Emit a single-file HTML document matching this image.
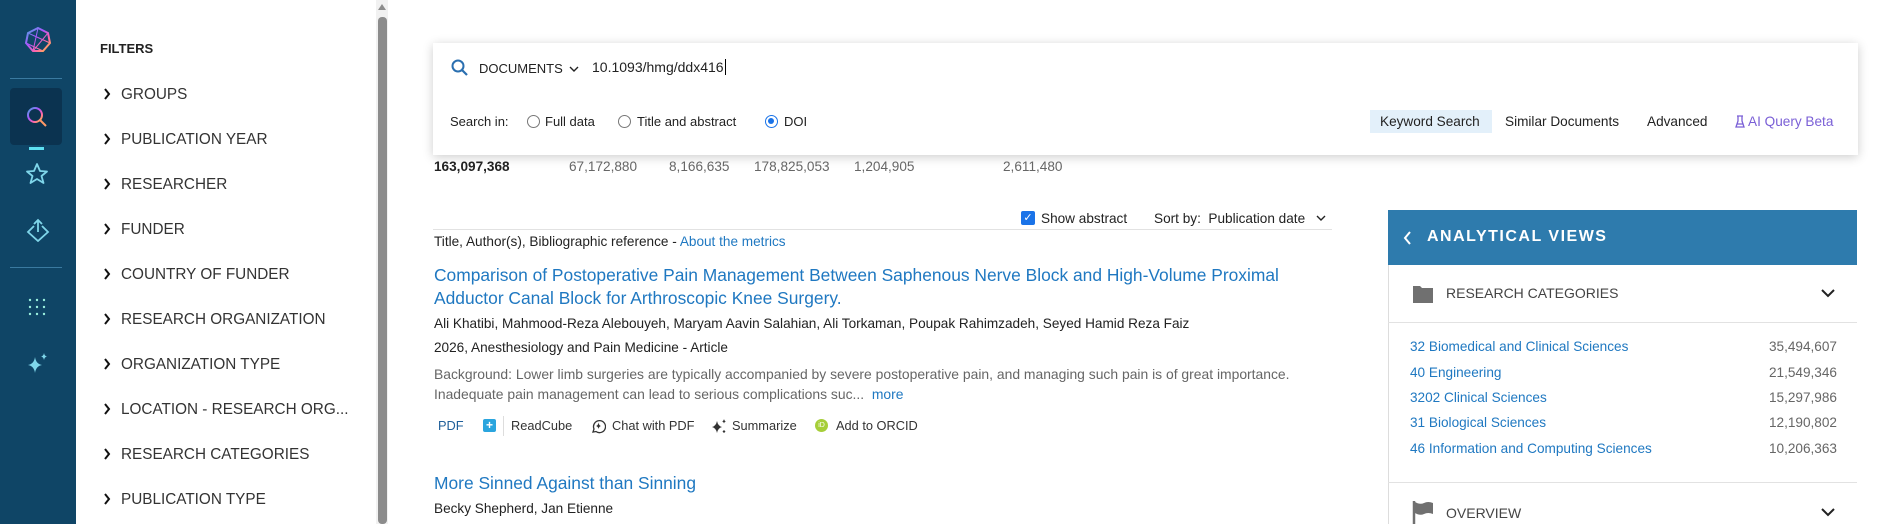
<!DOCTYPE html>
<html><head><meta charset="utf-8"><style>
*{margin:0;padding:0;box-sizing:border-box}
body{width:1897px;height:524px;overflow:hidden;background:#fff;font-family:"Liberation Sans",Arial,sans-serif;color:#222;position:relative}
.a{position:absolute;white-space:nowrap}
.side{left:0;top:0;width:76px;height:524px;background:#0f4566}
.fi{font-size:15.3px;color:#333;left:121px}
.blue{color:#1f78c1}
.grey{color:#666}
.t14{font-size:14px}
.t13{font-size:13px}
.t136{font-size:13.6px}
</style></head><body>
<div class="a side"></div>
<svg class="a" style="left:24px;top:26px" width="28" height="28" viewBox="0 0 28 28"><polygon points="14,2 24,7 26,17 19,25 9,25 2,17 4,7" fill="none" stroke="url(#g)" stroke-width="2"/><path d="M14,2 L9,25 M4,7 L26,17 M24,7 L9,25 M2,17 L19,25" stroke="url(#g)" stroke-width="1" fill="none"/><defs><linearGradient id="g" x1="0" y1="0" x2="1" y2="1"><stop offset="0" stop-color="#4ad"/><stop offset=".4" stop-color="#a5f"/><stop offset=".7" stop-color="#f6a"/><stop offset="1" stop-color="#fc3"/></linearGradient></defs></svg>
<div class="a" style="left:10px;top:78px;width:52px;height:1px;background:#3a7aa0"></div>
<div class="a" style="left:10px;top:88px;width:52px;height:57px;background:#0b3350;border-radius:4px"></div>
<svg class="a" style="left:25px;top:105px" width="24" height="24" viewBox="0 0 24 24"><circle cx="10" cy="10" r="7" fill="none" stroke="url(#g)" stroke-width="2"/><path d="M15 15l6 6" stroke="#f96" stroke-width="2"/></svg>
<div class="a" style="left:29px;top:147px;width:15px;height:3px;background:#5ee0f0"></div>
<svg class="a" style="left:25px;top:162px" width="24" height="24" viewBox="0 0 24 24"><polygon points="12,2 15,9 22,9.5 16.5,14 18.5,21 12,17 5.5,21 7.5,14 2,9.5 9,9" fill="none" stroke="#7fd6ea" stroke-width="1.8" stroke-linejoin="round"/></svg>
<svg class="a" style="left:26px;top:218px" width="24" height="24" viewBox="0 0 24 24"><path d="M8 8L2 14l10 9 10-9-6-6M12 2v12M8 6l4-4 4 4" fill="none" stroke="#7fd6ea" stroke-width="1.8"/></svg>
<div class="a" style="left:10px;top:267px;width:52px;height:1px;background:#3a7aa0"></div>
<svg class="a" style="left:27px;top:297px" width="20" height="20"><g fill="#9ed"><circle cx="3" cy="3" r="1.2"/><circle cx="10" cy="3" r="1.2"/><circle cx="17" cy="3" r="1.2"/><circle cx="3" cy="10" r="1.2"/><circle cx="10" cy="10" r="1.2"/><circle cx="17" cy="10" r="1.2"/><circle cx="3" cy="17" r="1.2"/><circle cx="10" cy="17" r="1.2"/><circle cx="17" cy="17" r="1.2"/></g></svg>
<svg class="a" style="left:26px;top:351px" width="24" height="24" viewBox="0 0 24 24"><path d="M9 6Q10 13 16 14Q10 15 9 22Q8 15 2 14Q8 13 9 6Z M18 2Q18.5 5 21 5.5Q18.5 6 18 9Q17.5 6 15 5.5Q17.5 5 18 2Z" fill="#7fd6ea"/></svg>

<div class="a" style="left:100px;top:41px;font-size:13px;font-weight:bold;color:#222">FILTERS</div>
<svg class="a" width="10" height="524" style="left:102px;top:0"><g fill="none" stroke="#111" stroke-width="2"><path d="M3 89l4 5-4 5"/><path d="M3 134l4 5-4 5"/><path d="M3 179l4 5-4 5"/><path d="M3 224l4 5-4 5"/><path d="M3 269l4 5-4 5"/><path d="M3 314l4 5-4 5"/><path d="M3 359l4 5-4 5"/><path d="M3 404l4 5-4 5"/><path d="M3 449l4 5-4 5"/><path d="M3 494l4 5-4 5"/></g></svg>
<div class="a fi" style="top:86px">GROUPS</div>
<div class="a fi" style="top:131px">PUBLICATION YEAR</div>
<div class="a fi" style="top:176px">RESEARCHER</div>
<div class="a fi" style="top:221px">FUNDER</div>
<div class="a fi" style="top:266px">COUNTRY OF FUNDER</div>
<div class="a fi" style="top:311px">RESEARCH ORGANIZATION</div>
<div class="a fi" style="top:356px">ORGANIZATION TYPE</div>
<div class="a fi" style="top:401px">LOCATION - RESEARCH ORG...</div>
<div class="a fi" style="top:446px">RESEARCH CATEGORIES</div>
<div class="a fi" style="top:491px">PUBLICATION TYPE</div>
<div class="a" style="left:376px;top:0;width:12px;height:524px;background:#f1f1f1"></div>
<div class="a" style="left:378px;top:17px;width:9px;height:507px;background:#8c8c8c;border-radius:4px"></div>
<div class="a" style="left:378px;top:4px;width:0;height:0;border-left:4.5px solid transparent;border-right:4.5px solid transparent;border-bottom:6px solid #8c8c8c"></div>

<div class="a" style="left:433px;top:43px;width:1425px;height:112px;background:#fff;box-shadow:0 2px 10px rgba(0,0,0,.2)"></div>
<svg class="a" style="left:451px;top:59px" width="18" height="18" viewBox="0 0 18 18"><circle cx="7" cy="7" r="5.5" fill="none" stroke="#2a6fb0" stroke-width="2"/><path d="M11 11l5 5" stroke="#2a6fb0" stroke-width="2.2"/></svg>
<div class="a t13" style="left:479px;top:61px;color:#222">DOCUMENTS</div>
<svg class="a" style="left:569px;top:66px" width="10" height="7"><path d="M1 1l4 4 4-4" fill="none" stroke="#222" stroke-width="1.4"/></svg>
<div class="a t14" style="left:592px;top:59px;color:#222">10.1093/hmg/ddx416<span style="border-left:1px solid #000;margin-left:1px"></span></div>
<div class="a t13" style="left:450px;top:114px">Search in:</div>
<div class="a" style="left:527px;top:115px;width:13px;height:13px;border:1px solid #777;border-radius:50%"></div>
<div class="a t13" style="left:545px;top:114px">Full data</div>
<div class="a" style="left:618px;top:115px;width:13px;height:13px;border:1px solid #777;border-radius:50%"></div>
<div class="a t13" style="left:637px;top:114px">Title and abstract</div>
<div class="a" style="left:765px;top:115px;width:13px;height:13px;border:1.5px solid #1a73e8;border-radius:50%"><div style="margin:2px;width:6px;height:6px;background:#1a73e8;border-radius:50%"></div></div>
<div class="a t13" style="left:784px;top:114px">DOI</div>
<div class="a" style="left:1370px;top:110px;width:122px;height:23px;background:#e3f0fa"></div>
<div class="a t136" style="left:1380px;top:114px">Keyword Search</div>
<div class="a t136" style="left:1505px;top:114px">Similar Documents</div>
<div class="a t136" style="left:1647px;top:114px">Advanced</div>
<svg class="a" style="left:1735px;top:115px" width="10" height="14" viewBox="0 0 10 14"><path d="M2 1h6M3 1v5L1 12h8L7 6V1M2 9h6" fill="none" stroke="#7a5fd6" stroke-width="1.3"/></svg>
<div class="a t136" style="left:1748px;top:114px;color:#7a5fd6">AI Query Beta</div>

<div class="a t136" style="left:434px;top:159px;font-weight:bold">163,097,368</div>
<div class="a t136 grey" style="left:569px;top:159px">67,172,880</div>
<div class="a t136 grey" style="left:669px;top:159px">8,166,635</div>
<div class="a t136 grey" style="left:754px;top:159px">178,825,053</div>
<div class="a t136 grey" style="left:854px;top:159px">1,204,905</div>
<div class="a t136 grey" style="left:1003px;top:159px">2,611,480</div>

<div class="a" style="left:1021px;top:211px;width:14px;height:14px;background:#1a73e8;border-radius:2px;color:#fff;font-size:11px;text-align:center;line-height:14px">✓</div>
<div class="a t136" style="left:1041px;top:211px">Show abstract</div>
<div class="a t136" style="left:1154px;top:211px">Sort by: &nbsp;Publication date</div>
<svg class="a" style="left:1316px;top:215px" width="10" height="7"><path d="M1 1l4 4 4-4" fill="none" stroke="#222" stroke-width="1.4"/></svg>
<div class="a" style="left:433px;top:229px;width:899px;height:1px;background:#e2e2e2"></div>
<div class="a t136" style="left:434px;top:234px">Title, Author(s), Bibliographic reference - <span class="blue">About the metrics</span></div>

<div class="a blue" style="left:434px;top:264px;font-size:17.4px;line-height:23px">Comparison of Postoperative Pain Management Between Saphenous Nerve Block and High-Volume Proximal<br>Adductor Canal Block for Arthroscopic Knee Surgery.</div>
<div class="a t136" style="left:434px;top:316px">Ali Khatibi, Mahmood-Reza Alebouyeh, Maryam Aavin Salahian, Ali Torkaman, Poupak Rahimzadeh, Seyed Hamid Reza Faiz</div>
<div class="a t136" style="left:434px;top:340px">2026, Anesthesiology and Pain Medicine - Article</div>
<div class="a grey" style="left:434px;top:364px;line-height:20px;font-size:13.9px">Background: Lower limb surgeries are typically accompanied by severe postoperative pain, and managing such pain is of great importance.<br>Inadequate pain management can lead to serious complications suc... <span class="blue">&nbsp;more</span></div>
<div class="a" style="left:438px;top:418px;font-size:12.8px;color:#1f5f9a">PDF</div>
<div class="a" style="left:483px;top:419px;width:13px;height:13px;background:#2aa5de;border-radius:2px;color:#fff;font-size:12px;line-height:13px;text-align:center;font-weight:bold">+</div>
<div class="a" style="left:503px;top:416px;width:1px;height:20px;background:#ddd"></div>
<div class="a" style="left:511px;top:418px;font-size:12.8px;color:#333">ReadCube</div>
<svg class="a" style="left:590px;top:418px" width="16" height="16" viewBox="0 0 16 16"><path d="M3 14l1-3A6 6 0 1 1 6 13.5Z" fill="none" stroke="#333" stroke-width="1.3"/><path d="M8.5 4.5Q9 7.5 11 8Q9 8.5 8.5 11Q8 8.5 6 8Q8 7.5 8.5 4.5Z" fill="#333"/></svg>
<div class="a" style="left:612px;top:418px;font-size:12.8px;color:#333">Chat with PDF</div>
<svg class="a" style="left:711px;top:418px" width="16" height="16" viewBox="0 0 16 16"><path d="M6 3Q7 8 11 9Q7 10 6 15Q5 10 1 9Q5 8 6 3Z M13 1Q13.4 3 15 3.4Q13.4 3.8 13 5.5Q12.6 3.8 11 3.4Q12.6 3 13 1Z M13 12l1.5 1.5L13 15l-1.5-1.5Z" fill="#333"/></svg>
<div class="a" style="left:732px;top:418px;font-size:12.8px;color:#333">Summarize</div>
<div class="a" style="left:815px;top:419px;width:13px;height:13px;background:#a6ce39;border-radius:50%;color:#fff;font-size:7px;line-height:13px;text-align:center">iD</div>
<div class="a" style="left:836px;top:418px;font-size:12.8px;color:#333">Add to ORCID</div>

<div class="a blue" style="left:434px;top:473px;font-size:17.4px">More Sinned Against than Sinning</div>
<div class="a t136" style="left:434px;top:501px">Becky Shepherd, Jan Etienne</div>

<div class="a" style="left:1388px;top:210px;width:469px;height:314px;border-left:1px solid #ddd;background:#fff"></div>
<div class="a" style="left:1388px;top:210px;width:469px;height:55px;background:#2e7bad"></div>
<svg class="a" style="left:1403px;top:231px" width="9" height="14"><path d="M7 1L2 7l5 6" fill="none" stroke="#fff" stroke-width="2"/></svg>
<div class="a" style="left:1427px;top:228px;color:#fff;font-size:16px;font-weight:bold;letter-spacing:1.5px">ANALYTICAL VIEWS</div>
<svg class="a" style="left:1412px;top:282px" width="22" height="22" viewBox="0 0 22 22"><path d="M1 4h7l2 2h11v15H1Z" fill="#707070"/></svg>
<div class="a" style="left:1446px;top:285px;font-size:14px;color:#444">RESEARCH CATEGORIES</div>
<svg class="a" style="left:1821px;top:288px" width="14" height="10"><path d="M1 2l6 6 6-6" fill="none" stroke="#222" stroke-width="2"/></svg>
<div class="a" style="left:1388px;top:322px;width:469px;height:1px;background:#e2e2e2"></div>
<div class="a t136 blue" style="left:1410px;top:339px">32 Biomedical and Clinical Sciences</div><div class="a t136 grey" style="right:60px;top:339px">35,494,607</div>
<div class="a t136 blue" style="left:1410px;top:365px">40 Engineering</div><div class="a t136 grey" style="right:60px;top:365px">21,549,346</div>
<div class="a t136 blue" style="left:1410px;top:390px">3202 Clinical Sciences</div><div class="a t136 grey" style="right:60px;top:390px">15,297,986</div>
<div class="a t136 blue" style="left:1410px;top:415px">31 Biological Sciences</div><div class="a t136 grey" style="right:60px;top:415px">12,190,802</div>
<div class="a t136 blue" style="left:1410px;top:441px">46 Information and Computing Sciences</div><div class="a t136 grey" style="right:60px;top:441px">10,206,363</div>
<div class="a" style="left:1388px;top:482px;width:469px;height:1px;background:#e2e2e2"></div>
<svg class="a" style="left:1412px;top:500px" width="22" height="24" viewBox="0 0 22 24"><path d="M2 1v23" stroke="#707070" stroke-width="2.5"/><path d="M3 2Q8 5 12 3Q16 1 21 3v11Q16 12 12 14Q8 16 3 13Z" fill="#707070"/></svg>
<div class="a" style="left:1446px;top:505px;font-size:14px;color:#444">OVERVIEW</div>
<svg class="a" style="left:1821px;top:507px" width="14" height="10"><path d="M1 2l6 6 6-6" fill="none" stroke="#222" stroke-width="2"/></svg>
</body></html>
